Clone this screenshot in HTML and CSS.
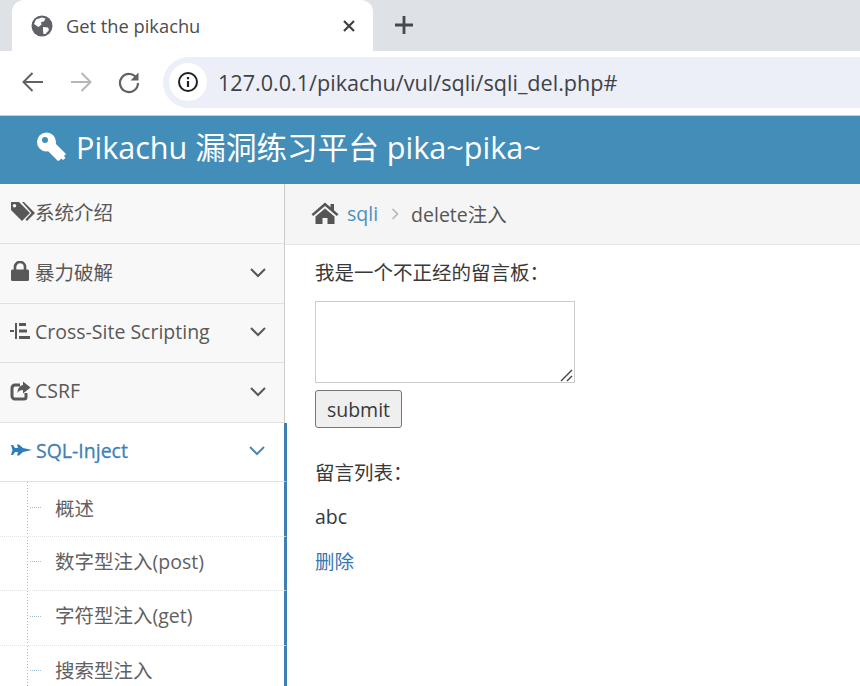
FILE: index.html
```html
<!DOCTYPE html>
<html lang="en">
<head>
    <meta charset="UTF-8">
    <meta name="viewport" content="width=device-width, initial-scale=1.0">
    <title>Get the pikachu</title>
    <link rel="stylesheet" href="styles.css">
</head>
<body>

<div class="tabstrip">
    <div class="tab">
        <svg class="globe" width="22" height="22" viewBox="0 0 22 22">
            <circle cx="11" cy="11" r="10.5" fill="#5f6368"/>
            <path d="M5 4.5 L11 2.5 L14.5 3.5 L13 6.5 L10 7 L10.5 9.5 L7.5 12 L3 9 Z M12 12 L17 12.5 L18 15 L14.5 19 L12.5 19 L12 16 Z" fill="#fff"/>
        </svg>
        <span class="tab-title">Get the pikachu</span>
        <svg class="tab-close" width="14" height="14" viewBox="0 0 14 14">
            <path d="M2 2 L12 12 M12 2 L2 12" stroke="#3c4043" stroke-width="2.2" fill="none"/>
        </svg>
    </div>
    <svg class="newtab" width="18" height="18" viewBox="0 0 18 18">
        <path d="M9 0 V18 M0 9 H18" stroke="#45484c" stroke-width="2.8" fill="none"/>
    </svg>
</div>

<div class="toolbar">
    <svg class="nav-icon" width="24" height="24" viewBox="0 0 24 24">
        <path d="M22 12 H3 M11.5 3 L2.5 12 L11.5 21" stroke="#5f6368" stroke-width="2" fill="none"/>
    </svg>
    <svg class="nav-icon" width="24" height="24" viewBox="0 0 24 24">
        <path d="M2 12 H21 M12.5 3 L21.5 12 L12.5 21" stroke="#b4b6b9" stroke-width="2" fill="none"/>
    </svg>
    <svg class="nav-icon" width="24" height="24" viewBox="0 0 24 24">
        <path d="M19.5 8 A9 9 0 1 0 21 13" stroke="#5f6368" stroke-width="2.2" fill="none"/>
        <path d="M21.5 2.5 V10.5 H13.5 Z" fill="#5f6368"/>
    </svg>
    <div class="addressbar">
        <span class="info-badge">
            <svg width="22" height="22" viewBox="0 0 22 22">
                <circle cx="11" cy="11" r="9" stroke="#202124" stroke-width="2" fill="none"/>
                <path d="M11 10 V16 M11 6 V8.2" stroke="#202124" stroke-width="2.2" fill="none"/>
            </svg>
        </span>
        <span class="url">127.0.0.1/pikachu/vul/sqli/sqli_del.php#</span>
    </div>
</div>

<div class="navbar">
    <svg class="key" width="31" height="31" viewBox="0 0 31 31">
        <path d="M10.5 0.5 A9.5 9.5 0 1 1 10.5 19.5 A9.5 9.5 0 1 1 10.5 0.5 Z M9 5 A3 3 0 1 0 9 11 A3 3 0 1 0 9 5 Z" fill="#fff" fill-rule="evenodd"/>
        <path d="M17 9 L30 22 L28 24 L29.5 26 L27 28 L25 26.5 L24 28 L22 29 L11 18 Z" fill="#fff"/>
    </svg>
    <span class="brand">Pikachu 漏洞练习平台 pika~pika~</span>
</div>

<div class="main">
    <ul class="sidebar">
        <li class="nav-item">
            <svg class="nav-svg" width="25" height="22" viewBox="0 0 25 22">
                <path d="M1 1 H9 L20 12 L12 20 L1 9 Z M4.5 3 A1.8 1.8 0 1 0 4.5 6.6 A1.8 1.8 0 1 0 4.5 3 Z" fill="#585858" fill-rule="evenodd"/>
                <path d="M12 1 H14 L25 12 L17 20 L15.5 18.5 L21.5 12 Z" fill="#585858"/>
            </svg>
            <span class="nav-label">系统介绍</span>
        </li>
        <li class="nav-item">
            <svg class="nav-svg" width="25" height="22" viewBox="0 0 25 22">
                <path d="M5 9 V6 A5 5 0 0 1 15 6 V9" stroke="#585858" stroke-width="2.6" fill="none"/>
                <rect x="1" y="8.5" width="18" height="11.5" rx="1.5" fill="#585858"/>
            </svg>
            <span class="nav-label">暴力破解</span>
            <svg class="chevron" width="16" height="10" viewBox="0 0 16 10"><path d="M1 1 L8 8 L15 1" stroke="#585858" stroke-width="2" fill="none"/></svg>
        </li>
        <li class="nav-item">
            <svg class="nav-svg" width="25" height="22" viewBox="1 0 25 22">
                <path d="M0 11 H5 M7 3 V19" stroke="#585858" stroke-width="2" fill="none"/>
                <path d="M10 3 H17 V6 H10 Z M10 9.5 H18 V12.5 H10 Z M10 16 H21 V19 H10 Z" fill="#585858"/>
            </svg>
            <span class="nav-label">Cross-Site Scripting</span>
            <svg class="chevron" width="16" height="10" viewBox="0 0 16 10"><path d="M1 1 L8 8 L15 1" stroke="#585858" stroke-width="2" fill="none"/></svg>
        </li>
        <li class="nav-item">
            <svg class="nav-svg" width="25" height="22" viewBox="0 0 25 22">
                <path d="M16 13 V17 A2 2 0 0 1 14 19 H5 A3 3 0 0 1 2 16 V8 A3 3 0 0 1 5 5 H10" stroke="#585858" stroke-width="3" fill="none"/>
                <path d="M13 1.5 L20.5 7.5 L13 13.5 V10 C10 10 8.5 11 7.5 13 C7.5 8.5 10 5.5 13 5 Z" fill="#585858"/>
            </svg>
            <span class="nav-label">CSRF</span>
            <svg class="chevron" width="16" height="10" viewBox="0 0 16 10"><path d="M1 1 L8 8 L15 1" stroke="#585858" stroke-width="2" fill="none"/></svg>
        </li>
        <li class="nav-item active">
            <svg class="nav-svg" width="26" height="22" viewBox="0 0 26 22">
                <path d="M1 6 H3 L5 9 H8 L7 5.5 H9 L13 9 L22 11 L13 13 L9 16.5 H7 L8 13 H5 L3 16 H1 L2.5 11 Z" fill="#2b7dbc"/>
            </svg>
            <span class="nav-label">SQL-Inject</span>
            <svg class="chevron" width="16" height="10" viewBox="0 0 16 10"><path d="M1 1 L8 8 L15 1" stroke="#4b88b8" stroke-width="2" fill="none"/></svg>
        </li>
        <li class="sub-item"><span>概述</span></li>
        <li class="sub-item"><span>数字型注入(post)</span></li>
        <li class="sub-item"><span>字符型注入(get)</span></li>
        <li class="sub-item"><span>搜索型注入</span></li>
    </ul>

    <div class="content">
        <div class="breadcrumbs">
            <svg class="home" width="28" height="24" viewBox="0 0 28 24">
                <path d="M14 1.5 L19.5 6.3 V3 H23 V9.3 L27.5 13.3 L25.8 15 L14 5 L2.2 15 L0.5 13.3 Z" fill="#555"/>
                <path d="M14 7.5 L23.5 15.5 V23 H16.5 V17 H11.5 V23 H4.5 V15.5 Z" fill="#555"/>
            </svg>
            <a class="crumb-link" href="#">sqli</a>
            <svg class="crumb-sep" width="8" height="12" viewBox="0 0 8 12"><path d="M1.5 1 L6.5 6 L1.5 11" stroke="#b2b6bf" stroke-width="1.6" fill="none"/></svg>
            <span class="crumb-text">delete注入</span>
        </div>
        <div class="page">
            <p class="intro">我是一个不正经的留言板：</p>
            <div class="msg-wrap">
                <textarea class="msg"></textarea>
                <svg class="grip" width="13" height="14" viewBox="0 0 13 14">
                    <path d="M1 13 L12 2 M7 13 L12 8" stroke="#444" stroke-width="1.4" fill="none"/>
                </svg>
            </div>
            <button class="submit">submit</button>
            <p class="list-title">留言列表：</p>
            <p class="msg-row">abc</p>
            <a class="del" href="#">删除</a>
        </div>
    </div>
</div>

</body>
</html>
```

FILE: styles.css
```css
html, body {
    margin: 0;
    padding: 0;
    height: 686px;
    overflow: hidden;
}
body {
    font-family: "Open Sans", "Noto Sans CJK SC", sans-serif;
    font-size: 20px;
    color: #393939;
    background: #fff;
}
.tabstrip {
    height: 51px;
    background: #dee1e6;
    display: flex;
    align-items: flex-end;
}
.tab {
    width: 361px;
    height: 51px;
    margin-left: 12px;
    background: #fff;
    border-radius: 12px 12px 0 0;
    display: flex;
    align-items: center;
    box-sizing: border-box;
    padding: 0 17px 0 19px;
}
.tab-title {
    margin-left: 13px;
    flex: 1;
    font-family: "Open Sans", sans-serif;
    font-size: 18.3px;
    color: #4a4d51;
}
.tab-close {
    flex: none;
}
.newtab {
    margin: 0 0 17px 22px;
}
.toolbar {
    height: 64px;
    box-sizing: border-box;
    background: #fff;
    display: flex;
    align-items: center;
    padding: 0 0 2px 21px;
    gap: 24px;
}
.addressbar {
    height: 51px;
    flex: 1;
    margin-left: -2px;
    background: #eceff7;
    border-radius: 26px 0 0 26px;
    display: flex;
    align-items: center;
    padding-left: 6px;
}
.info-badge {
    width: 38px;
    height: 38px;
    border-radius: 50%;
    background: #fff;
    display: flex;
    align-items: center;
    justify-content: center;
}
.url {
    margin-left: 11px;
    font-size: 21.6px;
    color: #3f4246;
}
.navbar {
    height: 69px;
    box-sizing: border-box;
    background: #438eb9;
    border-top: 1px solid #b5cfe0;
    display: flex;
    align-items: center;
    padding: 0 0 6px 36px;
    color: #fff;
}
.key {
    margin-right: 9px;
}
.brand {
    font-size: 30.6px;
    line-height: 1;
}
.main {
    display: flex;
    height: 502px;
}
.sidebar {
    width: 285px;
    flex: none;
    box-sizing: border-box;
    margin: 0;
    padding: 0;
    list-style: none;
    background: #f8f8f8;
    border-right: 1px solid #ccc;
}
.nav-item {
    height: 60px;
    box-sizing: border-box;
    border-bottom: 1px solid #e1e1e1;
    display: flex;
    align-items: center;
    padding: 0 18px 4px 10px;
    color: #585858;
}
.nav-item:nth-child(3), .nav-item:nth-child(5) {
    height: 59px;
}
.nav-svg {
    flex: none;
}
.nav-label {
    flex: 1;
    font-size: 19.5px;
}
.chevron {
    margin-top: 2px;
}
.nav-item.active {
    background: #fff;
    margin-right: -3px;
    border-right: 3px solid #3f7fb3;
    padding-right: 19px;
}
.nav-item.active .nav-label {
    font-weight: 500;
    color: #3f7fb8;
    -webkit-text-stroke: 0.3px #3f7fb8;
}
.sub-item {
    height: 54.5px;
    box-sizing: border-box;
    margin-right: -3px;
    border-right: 3px solid #3f7fb3;
    border-bottom: 1px dotted #e4e4e4;
    display: flex;
    align-items: center;
    padding: 0 0 6px 55px;
    font-size: 19.5px;
    color: #616161;
    background-color: #fff;
    background-image: repeating-linear-gradient(#9dbdd6 0 1px, transparent 1px 3px), repeating-linear-gradient(90deg, #9dbdd6 0 1px, transparent 1px 2px);
    background-size: 1px 100%, 11px 1px;
    background-repeat: no-repeat, no-repeat;
    background-position: 27px 0, 30px 47%;
}
.nav-item.active + .sub-item {
    padding-bottom: 3px;
}
.content {
    flex: 1;
    min-width: 0;
}
.breadcrumbs {
    height: 61px;
    box-sizing: border-box;
    background: #f5f5f5;
    border-bottom: 1px solid #e5e5e5;
    display: flex;
    align-items: center;
    padding: 0 0 2px 26px;
    font-size: 19.5px;
}
.crumb-link {
    margin-left: 8px;
    color: #4c8fbd;
    text-decoration: none;
}
.crumb-sep {
    margin: 2px 12px 0 13px;
}
.crumb-text {
    color: #555;
}
.page {
    padding-left: 30px;
    font-size: 19.5px;
}
.page p {
    margin: 0;
}
.intro {
    padding-top: 13px;
    line-height: 30px;
}
.msg-wrap {
    position: relative;
    width: 260px;
    margin-top: 13px;
}
.msg {
    display: block;
    width: 260px;
    height: 82px;
    box-sizing: border-box;
    border: 1px solid #ccc;
    padding: 2px;
    background: #fff;
    resize: none;
}
.grip {
    position: absolute;
    right: 2px;
    bottom: 1px;
}
.submit {
    display: block;
    width: 87px;
    height: 38px;
    margin-top: 7px;
    padding: 0;
    border: 1px solid #767676;
    border-radius: 3px;
    background: #efefef;
    font: inherit;
    color: #393939;
}
.page .list-title {
    margin-top: 30px;
    line-height: 30px;
}
.page .msg-row {
    margin-top: 14px;
    line-height: 30px;
}
.del {
    display: block;
    margin-top: 15px;
    line-height: 30px;
    color: #3a76b0;
    text-decoration: none;
}
```
